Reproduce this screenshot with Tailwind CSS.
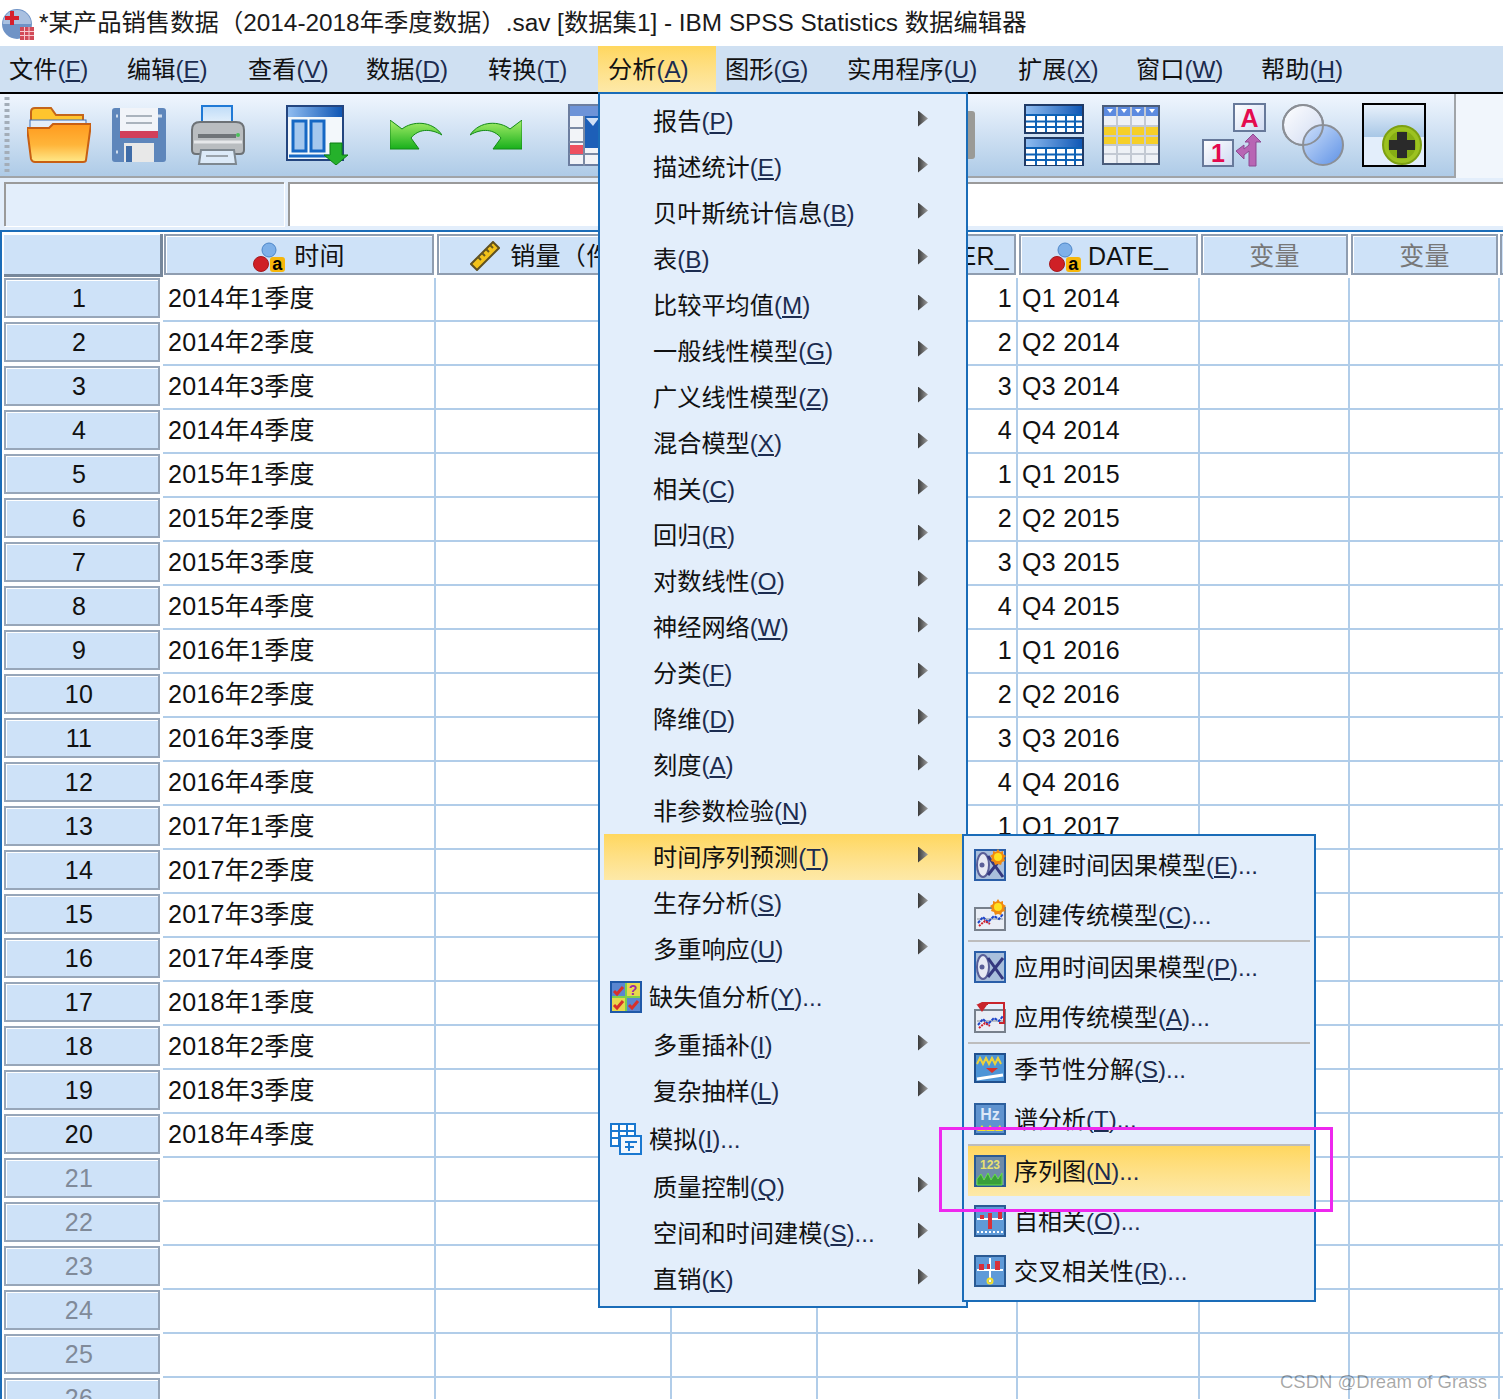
<!DOCTYPE html>
<html lang="zh"><head><meta charset="utf-8"><title>SPSS</title>
<script src="https://cdn.jsdelivr.net/npm/@tailwindcss/browser@4"></script></head>
<body class="relative w-[1503px] h-[1399px] overflow-hidden bg-white text-[#111] text-[24.2px] font-['Liberation_Sans','Noto_Sans_CJK_SC',sans-serif] [&_i]:not-italic [&_i]:text-[#1c2c50]">
<svg class="absolute w-0 h-0"><defs>
<linearGradient id="gf" x1="0" y1="0" x2="0" y2="1"><stop offset="0" stop-color="#ff9a1e"/><stop offset=".55" stop-color="#ffb53a"/><stop offset="1" stop-color="#ffe98a"/></linearGradient>
<linearGradient id="gg" x1="0" y1="0" x2="0" y2="1"><stop offset="0" stop-color="#a8ee6a"/><stop offset="1" stop-color="#18b01c"/></linearGradient>
<linearGradient id="gb" x1="0" y1="0" x2="1" y2="0"><stop offset="0" stop-color="#8fbcf0"/><stop offset="1" stop-color="#0f57b5"/></linearGradient>
<linearGradient id="gc" x1="0" y1="0" x2="1" y2="1"><stop offset="0" stop-color="#fff"/><stop offset="1" stop-color="#cfdaf2"/></linearGradient>
<linearGradient id="gd" x1="0" y1="0" x2="1" y2="1"><stop offset="0" stop-color="#cfe0fa"/><stop offset="1" stop-color="#5e92e6"/></linearGradient>
<linearGradient id="gp" x1="0" y1="0" x2="0" y2="1"><stop offset="0" stop-color="#bfdcf8"/><stop offset="1" stop-color="#eef6fd"/></linearGradient>
<symbol id="nom" viewBox="0 0 32 30"><circle cx="16" cy="8" r="7" fill="#7eb0e8" stroke="#4d86c8"/><circle cx="8" cy="22" r="7.5" fill="#cf2026" stroke="#a51a1e"/><rect x="17" y="15" width="15" height="15" rx="3" fill="#f6b60a"/><text x="24.5" y="28" text-anchor="middle" font-family="Liberation Sans" font-weight="700" font-size="18" fill="#000">a</text></symbol>
<symbol id="cau" viewBox="0 0 32 32"><rect x="1" y="1" width="30" height="30" fill="#a9bfdc" stroke="#2a5ea8" stroke-width="2"/><ellipse cx="9" cy="16" rx="6" ry="12" fill="#e6e9f4" stroke="#5a5f98" stroke-width="2"/><path d="M14 7L29 28M29 7L14 26" fill="none" stroke="#34387f" stroke-width="3"/><circle cx="8" cy="16" r="2.500" fill="#5a5f98"/></symbol>
<symbol id="star" viewBox="0 0 16 16"><path d="M8 0l2 3 3-1 0 3 3 2-2 2 1 3-3 1-1 3-3-1-3 1-1-3-3-1 1-3-2-2 3-2 0-3 3 1z" fill="#f08a10"/><circle cx="8" cy="8" r="4" fill="#ffe020"/></symbol>
<symbol id="line" viewBox="0 0 32 32"><rect x="1" y="9" width="30" height="22" fill="#e9eef6" stroke="#77808c" stroke-width="2"/><path d="M3 20h26" stroke="#8a9099"/><path d="M4 24l5-6 5 5 6-6 5 3 4-5" fill="none" stroke="#1c44c8" stroke-width="2" stroke-dasharray="3 1"/><path d="M5 27l6-5 5 3" fill="none" stroke="#d2202a" stroke-width="2" stroke-dasharray="2 1"/></symbol>
</defs></svg>

<!-- 标题栏 -->
<header class="h-[46px] flex items-center pl-[2px] pt-[1px] bg-white">
<svg class="w-[32px] h-[32px] shrink-0" viewBox="0 0 32 32"><circle cx="15" cy="16" r="15" fill="#6f93c6"/><path d="M1 16a14 14 0 0 1 28 0z" fill="#a9c0e0"/><path d="M10 3v14M3 10h14" stroke="#d61f2c" stroke-width="4"/><rect x="18" y="19" width="14" height="13" fill="#d24a58"/><path d="M18 23.5h14M18 27.5h14M22.500 19v13M27 19v13" stroke="#f6c9cf"/></svg>
<span class="ml-[5px] whitespace-nowrap text-[24.35px] text-[#1a1a1a]">*某产品销售数据（2014-2018年季度数据）.sav [数据集1] - IBM SPSS Statistics 数据编辑器</span>
</header>

<!-- 菜单栏 -->
<nav class="h-[48px] flex items-stretch bg-[#cfe0f2] border-b-2 border-black pl-[9px] whitespace-nowrap [&>div]:pt-[2px]">
<div class="w-[118px] flex items-center">文件<i>(<u>F</u>)</i></div>
<div class="w-[121px] flex items-center">编辑<i>(<u>E</u>)</i></div>
<div class="w-[118px] flex items-center">查看<i>(<u>V</u>)</i></div>
<div class="w-[122px] flex items-center">数据<i>(<u>D</u>)</i></div>
<div class="w-[110px] flex items-center">转换<i>(<u>T</u>)</i></div>
<div class="w-[118px] flex items-center pl-[10px] bg-gradient-to-b from-[#ffd75e] to-[#fde9a8]">分析<i>(<u>A</u>)</i></div>
<div class="w-[122px] flex items-center ml-[9px]">图形<i>(<u>G</u>)</i></div>
<div class="w-[171px] flex items-center">实用程序<i>(<u>U</u>)</i></div>
<div class="w-[118px] flex items-center">扩展<i>(<u>X</u>)</i></div>
<div class="w-[125px] flex items-center">窗口<i>(<u>W</u>)</i></div>
<div class="flex items-center">帮助<i>(<u>H</u>)</i></div>
</nav>

<!-- 工具栏 -->
<div class="h-[84px] bg-[#f1f6fc]">
<div class="w-[1456px] h-full flex items-center border-r-2 border-b-2 border-[#a0a4a8] bg-gradient-to-b from-[#f0f6fe] to-[#aecbe7] overflow-hidden">
<svg class="w-[6px] h-[76px] ml-[4px] shrink-0" viewBox="0 0 6 76"><path d="M3 0v76" stroke="#a3adb8" stroke-width="5" stroke-dasharray="3 3"/></svg>
<svg class="w-[64px] h-[56px] ml-[17px] shrink-0" viewBox="0 0 64 56"><path d="M4 5q0-4 4-4h16l5 7h27v16H4z" fill="#ffc52e" stroke="#c4651a" stroke-width="2"/><rect x="3" y="13" width="56" height="22" fill="#e4eef9" stroke="#3f6fb5"/><path d="M0 21h22l4-4h38l-5 36q0 2-3 2H8q-3 0-4-3z" fill="url(#gf)" stroke="#c85f12" stroke-width="2"/></svg>
<svg class="w-[54px] h-[54px] ml-[21px] shrink-0" viewBox="0 0 54 54"><path d="M0 3q0-3 3-3h48q3 0 3 3v48q0 3-3 3H3q-3 0-3-3z" fill="#5e86bb"/><rect x="8" y="0" width="38" height="30" fill="#f1f4f9"/><path d="M14 8h26M14 15h26" stroke="#aab3bd" stroke-width="2"/><rect x="8" y="23" width="38" height="7" fill="#d2405a"/><rect x="12" y="35" width="30" height="19" fill="#e8e8e8"/><rect x="14" y="38" width="6" height="16" fill="#3f6ca8"/><path d="M46 8h4M4 8h2M4 44h2" stroke="#cfdcec" stroke-width="3"/></svg>
<svg class="w-[56px] h-[62px] ml-[24px] shrink-0" viewBox="0 0 56 62"><path d="M12 2h30v22H12z" fill="url(#gp)" stroke="#1f79d6" stroke-width="2"/><path d="M2 26q0-8 8-8h36q8 0 8 8v20q0 4-4 4H6q-4 0-4-4z" fill="#b9bdc0" stroke="#6d7276" stroke-width="2"/><rect x="8" y="30" width="38" height="4" fill="#6f7478"/><path d="M4 38h48" stroke="#e6e8ea" stroke-width="3"/><circle cx="48" cy="31" r="2" fill="#4cc05a"/><path d="M11 46h33l2 14H9z" fill="#dceaf8" stroke="#7e8890" stroke-width="2"/><path d="M16 52h22" stroke="#9aa3ab" stroke-width="2"/></svg>
<svg class="w-[62px] h-[60px] ml-[40px] shrink-0" viewBox="0 0 62 60"><rect x="1" y="1" width="56" height="54" fill="#f3f8fb" stroke="#23457f" stroke-width="2"/><rect x="2" y="2" width="54" height="10" fill="url(#gb)"/><rect x="7" y="16" width="13" height="30" fill="#a5c8ee" stroke="#1668c4" stroke-width="3"/><rect x="25" y="16" width="13" height="30" fill="#a5c8ee" stroke="#1668c4" stroke-width="3"/><path d="M3 51h40" stroke="#1668c4" stroke-width="3"/><path d="M44 38h12v12h6L50 60 38 50h6z" fill="#25b12b" stroke="#0d7f15"/></svg>
<svg class="w-[52px] h-[30px] ml-[42px] shrink-0" viewBox="0 0 52 30"><path d="M0 0l12 9C22 1 42 0 52 15 40 8 28 9 21 18l8 11H0z" fill="url(#gg)" stroke="#148a18"/></svg>
<svg class="w-[52px] h-[30px] ml-[28px] shrink-0" viewBox="0 0 52 30"><path d="M52 0L40 9C30 1 10 0 0 15 12 8 24 9 31 18l-8 11h29z" fill="url(#gg)" stroke="#148a18"/></svg>
<svg class="w-[60px] h-[62px] ml-[46px] shrink-0" viewBox="0 0 60 62"><rect x="1" y="1" width="58" height="60" fill="#f2f4f8" stroke="#6c7ea0" stroke-width="2"/><rect x="2" y="2" width="56" height="10" fill="#6d93d8"/><path d="M16 12v50M1 24h15M1 38h15M1 50h58" stroke="#7b8aa4" stroke-width="2"/><rect x="17" y="12" width="15" height="32" fill="#1d5fb8"/><path d="M18 14h13l-6 8z" fill="#cfe0f6"/><rect x="2" y="41" width="13" height="9" fill="#ee5060"/></svg>
<svg class="w-[30px] h-[48px] ml-[317px] shrink-0" viewBox="0 0 30 48"><rect x="14" y="0" width="16" height="48" rx="3" fill="#9a9a96"/></svg>
<svg class="w-[60px] h-[62px] ml-[49px] shrink-0" viewBox="0 0 60 62"><rect x="1" y="1" width="58" height="28" fill="#fff" stroke="#1f3a66" stroke-width="2"/><rect x="2" y="2" width="56" height="9" fill="url(#gb)"/><path d="M2 11h56M2 17.500h56M2 23h56M12 11v17M22 11v17M32 11v17M42 11v17M51 11v17" stroke="#0e62b6" stroke-width="2"/><g transform="translate(0 33)"><rect x="1" y="1" width="58" height="28" fill="#fff" stroke="#1f3a66" stroke-width="2"/><rect x="2" y="2" width="56" height="9" fill="url(#gb)"/><path d="M2 11h56M2 17.500h56M2 23h56M12 11v17M22 11v17M32 11v17M42 11v17M51 11v17" stroke="#0e62b6" stroke-width="2"/></g></svg>
<svg class="w-[58px] h-[60px] ml-[18px] shrink-0" viewBox="0 0 58 60"><rect x="1" y="1" width="56" height="58" fill="#eef1f6" stroke="#4a5c7a" stroke-width="2"/><rect x="2" y="2" width="54" height="9" fill="#5d8be0"/><rect x="2" y="21" width="54" height="19" fill="#f6cf28"/><path d="M15 2v56M29 2v56M43 2v56M2 21h54M2 31h54M2 40h54M2 49h54" stroke="#c3c9d3" stroke-width="2"/><path d="M5 4h6l-3 4zM19 4h6l-3 4zM33 4h6l-3 4zM47 4h6l-3 4z" fill="#fff"/></svg>
<svg class="w-[64px] h-[64px] ml-[42px] shrink-0" viewBox="0 0 64 64"><rect x="32" y="1" width="31" height="27" fill="url(#gc)" stroke="#67799a" stroke-width="2"/><text x="47.500" y="24" text-anchor="middle" font-family="Liberation Sans" font-weight="700" font-size="25" fill="#e40a4e">A</text><rect x="1" y="37" width="30" height="26" fill="url(#gc)" stroke="#67799a" stroke-width="2"/><text x="16" y="59" text-anchor="middle" font-family="Liberation Sans" font-weight="700" font-size="25" fill="#e40a4e">1</text><path d="M51 31l8 8h-5v24h-7V48l-5 4v4l-8-8 8-6v4l5-4v-3h-4z" fill="#b865b4" stroke="#8d4a92"/></svg>
<svg class="w-[62px] h-[62px] ml-[16px] shrink-0" viewBox="0 0 62 62"><circle cx="21" cy="21" r="20" fill="url(#gc)" stroke="#8b8f96" stroke-width="2"/><circle cx="41" cy="41" r="20" fill="url(#gd)" stroke="#8b8f96" stroke-width="2"/><circle cx="21" cy="21" r="20" fill="none" stroke="#8b8f96" stroke-width="2"/></svg>
<div class="w-[64px] h-[64px] ml-[18px] shrink-0 border-2 border-black bg-[#e3eefb] relative">
<div class="h-[32px] bg-gradient-to-b from-[#e8f1fb] to-[#a8c7e6]"></div>
<svg class="absolute left-[18px] top-[20px] w-[40px] h-[40px]" viewBox="0 0 40 40"><circle cx="20" cy="20" r="19" fill="#9cc220" stroke="#7da012" stroke-width="2"/><circle cx="20" cy="20" r="14" fill="#86ad14"/><path d="M15 7h10v8h8v10h-8v8H15v-8H7V15h8z" fill="#2a2a2a"/></svg>
</div>
</div></div>

<!-- 编辑栏 -->
<div class="h-[52px] bg-[#e3eefb] flex pt-[4px] pl-[4px] gap-[4px]">
<div class="w-[280px] h-[44px] border-l-2 border-t-2 border-[#9a9a9a] bg-[#e3eefb] shadow-[1px_1px_0_#fff]"></div>
<div class="flex-1 h-[44px] border-l-2 border-t-2 border-[#9a9a9a] bg-white"></div>
</div>

<!-- 数据表 -->
<main class="text-[25px] tracking-[0.3px] border-l-2 border-t-2 border-[#1a6cb8] pl-[2px] grid grid-cols-[159px_273px_236px_146px_200px_182px_150px_150px_3px] grid-rows-[46px] auto-rows-[44px] [&>div]:border-r-2 [&>div]:border-b-2 [&>div]:border-[#b1cde9] [&>div]:pl-[5px] [&>div]:leading-[40px] [&>div]:whitespace-nowrap">
<span class="mt-[2px] h-[43px] bg-[#cee2f8] border-r-[3px] border-b-[3px] border-[#76879b] shadow-[inset_0_1px_0_#fff]"></span>
<span class="mt-[2px] ml-[1px] mr-[2px] h-[41px] pt-[5px] flex items-center justify-center gap-[9px] bg-[#cee2f8] border-2 border-[#8f9db0] shadow-[inset_1px_1px_0_#fff]"><svg class="w-[32px] h-[30px]"><use href="#nom"/></svg>时间</span>
<span class="mt-[2px] mr-[2px] ml-[1px] h-[41px] pt-[5px] flex items-center justify-center gap-[10px] bg-[#cee2f8] border-2 border-[#8f9db0] shadow-[inset_1px_1px_0_#fff]"><svg class="w-[30px] h-[30px] -mt-[3px]" viewBox="0 0 30 30"><path d="M1 23L23 1l6 6L7 29z" fill="#f2c21a" stroke="#5f5020" stroke-width="2"/><path d="M8 16l3 3M12 12l3 3M16 8l3 3M20 4l3 3" stroke="#6a5a20" stroke-width="2"/></svg>销量（件）</span>
<span class="mt-[2px] mr-[2px] ml-[1px] h-[41px] bg-[#cee2f8] border-2 border-[#8f9db0]"></span>
<span class="mt-[2px] mr-[2px] ml-[1px] h-[41px] pt-[5px] flex items-center justify-end gap-[8px] pr-[5px] bg-[#cee2f8] border-2 border-[#8f9db0]"><svg class="w-[32px] h-[30px]"><use href="#nom"/></svg>QUARTER_</span>
<span class="mt-[2px] mr-[2px] ml-[1px] h-[41px] pt-[5px] flex items-center justify-center gap-[7px] bg-[#cee2f8] border-2 border-[#8f9db0] shadow-[inset_1px_1px_0_#fff]"><svg class="w-[32px] h-[30px]"><use href="#nom"/></svg>DATE_</span>
<span class="mt-[2px] mr-[2px] ml-[1px] h-[41px] pt-[5px] flex items-center justify-center text-[#777] bg-[#cee2f8] border-2 border-[#8f9db0] shadow-[inset_1px_1px_0_#fff]">变量</span>
<span class="mt-[2px] mr-[2px] ml-[1px] h-[41px] pt-[5px] flex items-center justify-center text-[#777] bg-[#cee2f8] border-2 border-[#8f9db0] shadow-[inset_1px_1px_0_#fff]">变量</span>
<span class="mt-[2px] h-[41px] bg-[#cee2f8] border-l-2 border-y-2 border-[#8f9db0]"></span>

<span class="w-[156px] h-[40px] flex items-center justify-center pr-[6px] pt-[2px] bg-[#cee2f8] border-2 border-[#97a6b9] shadow-[inset_1px_1px_0_#fff]">1</span><div>2014年1季度</div><div></div><div></div><div class="text-right pr-[4px]">1</div><div class="!pl-[4px]">Q1 2014</div><div></div><div></div><div></div>
<span class="w-[156px] h-[40px] flex items-center justify-center pr-[6px] pt-[2px] bg-[#cee2f8] border-2 border-[#97a6b9] shadow-[inset_1px_1px_0_#fff]">2</span><div>2014年2季度</div><div></div><div></div><div class="text-right pr-[4px]">2</div><div class="!pl-[4px]">Q2 2014</div><div></div><div></div><div></div>
<span class="w-[156px] h-[40px] flex items-center justify-center pr-[6px] pt-[2px] bg-[#cee2f8] border-2 border-[#97a6b9] shadow-[inset_1px_1px_0_#fff]">3</span><div>2014年3季度</div><div></div><div></div><div class="text-right pr-[4px]">3</div><div class="!pl-[4px]">Q3 2014</div><div></div><div></div><div></div>
<span class="w-[156px] h-[40px] flex items-center justify-center pr-[6px] pt-[2px] bg-[#cee2f8] border-2 border-[#97a6b9] shadow-[inset_1px_1px_0_#fff]">4</span><div>2014年4季度</div><div></div><div></div><div class="text-right pr-[4px]">4</div><div class="!pl-[4px]">Q4 2014</div><div></div><div></div><div></div>
<span class="w-[156px] h-[40px] flex items-center justify-center pr-[6px] pt-[2px] bg-[#cee2f8] border-2 border-[#97a6b9] shadow-[inset_1px_1px_0_#fff]">5</span><div>2015年1季度</div><div></div><div></div><div class="text-right pr-[4px]">1</div><div class="!pl-[4px]">Q1 2015</div><div></div><div></div><div></div>
<span class="w-[156px] h-[40px] flex items-center justify-center pr-[6px] pt-[2px] bg-[#cee2f8] border-2 border-[#97a6b9] shadow-[inset_1px_1px_0_#fff]">6</span><div>2015年2季度</div><div></div><div></div><div class="text-right pr-[4px]">2</div><div class="!pl-[4px]">Q2 2015</div><div></div><div></div><div></div>
<span class="w-[156px] h-[40px] flex items-center justify-center pr-[6px] pt-[2px] bg-[#cee2f8] border-2 border-[#97a6b9] shadow-[inset_1px_1px_0_#fff]">7</span><div>2015年3季度</div><div></div><div></div><div class="text-right pr-[4px]">3</div><div class="!pl-[4px]">Q3 2015</div><div></div><div></div><div></div>
<span class="w-[156px] h-[40px] flex items-center justify-center pr-[6px] pt-[2px] bg-[#cee2f8] border-2 border-[#97a6b9] shadow-[inset_1px_1px_0_#fff]">8</span><div>2015年4季度</div><div></div><div></div><div class="text-right pr-[4px]">4</div><div class="!pl-[4px]">Q4 2015</div><div></div><div></div><div></div>
<span class="w-[156px] h-[40px] flex items-center justify-center pr-[6px] pt-[2px] bg-[#cee2f8] border-2 border-[#97a6b9] shadow-[inset_1px_1px_0_#fff]">9</span><div>2016年1季度</div><div></div><div></div><div class="text-right pr-[4px]">1</div><div class="!pl-[4px]">Q1 2016</div><div></div><div></div><div></div>
<span class="w-[156px] h-[40px] flex items-center justify-center pr-[6px] pt-[2px] bg-[#cee2f8] border-2 border-[#97a6b9] shadow-[inset_1px_1px_0_#fff]">10</span><div>2016年2季度</div><div></div><div></div><div class="text-right pr-[4px]">2</div><div class="!pl-[4px]">Q2 2016</div><div></div><div></div><div></div>
<span class="w-[156px] h-[40px] flex items-center justify-center pr-[6px] pt-[2px] bg-[#cee2f8] border-2 border-[#97a6b9] shadow-[inset_1px_1px_0_#fff]">11</span><div>2016年3季度</div><div></div><div></div><div class="text-right pr-[4px]">3</div><div class="!pl-[4px]">Q3 2016</div><div></div><div></div><div></div>
<span class="w-[156px] h-[40px] flex items-center justify-center pr-[6px] pt-[2px] bg-[#cee2f8] border-2 border-[#97a6b9] shadow-[inset_1px_1px_0_#fff]">12</span><div>2016年4季度</div><div></div><div></div><div class="text-right pr-[4px]">4</div><div class="!pl-[4px]">Q4 2016</div><div></div><div></div><div></div>
<span class="w-[156px] h-[40px] flex items-center justify-center pr-[6px] pt-[2px] bg-[#cee2f8] border-2 border-[#97a6b9] shadow-[inset_1px_1px_0_#fff]">13</span><div>2017年1季度</div><div></div><div></div><div class="text-right pr-[4px]">1</div><div class="!pl-[4px]">Q1 2017</div><div></div><div></div><div></div>
<span class="w-[156px] h-[40px] flex items-center justify-center pr-[6px] pt-[2px] bg-[#cee2f8] border-2 border-[#97a6b9] shadow-[inset_1px_1px_0_#fff]">14</span><div>2017年2季度</div><div></div><div></div><div></div><div></div><div></div><div></div><div></div>
<span class="w-[156px] h-[40px] flex items-center justify-center pr-[6px] pt-[2px] bg-[#cee2f8] border-2 border-[#97a6b9] shadow-[inset_1px_1px_0_#fff]">15</span><div>2017年3季度</div><div></div><div></div><div></div><div></div><div></div><div></div><div></div>
<span class="w-[156px] h-[40px] flex items-center justify-center pr-[6px] pt-[2px] bg-[#cee2f8] border-2 border-[#97a6b9] shadow-[inset_1px_1px_0_#fff]">16</span><div>2017年4季度</div><div></div><div></div><div></div><div></div><div></div><div></div><div></div>
<span class="w-[156px] h-[40px] flex items-center justify-center pr-[6px] pt-[2px] bg-[#cee2f8] border-2 border-[#97a6b9] shadow-[inset_1px_1px_0_#fff]">17</span><div>2018年1季度</div><div></div><div></div><div></div><div></div><div></div><div></div><div></div>
<span class="w-[156px] h-[40px] flex items-center justify-center pr-[6px] pt-[2px] bg-[#cee2f8] border-2 border-[#97a6b9] shadow-[inset_1px_1px_0_#fff]">18</span><div>2018年2季度</div><div></div><div></div><div></div><div></div><div></div><div></div><div></div>
<span class="w-[156px] h-[40px] flex items-center justify-center pr-[6px] pt-[2px] bg-[#cee2f8] border-2 border-[#97a6b9] shadow-[inset_1px_1px_0_#fff]">19</span><div>2018年3季度</div><div></div><div></div><div></div><div></div><div></div><div></div><div></div>
<span class="w-[156px] h-[40px] flex items-center justify-center pr-[6px] pt-[2px] bg-[#cee2f8] border-2 border-[#97a6b9] shadow-[inset_1px_1px_0_#fff]">20</span><div>2018年4季度</div><div></div><div></div><div></div><div></div><div></div><div></div><div></div>
<span class="w-[156px] h-[40px] flex items-center justify-center pr-[6px] pt-[2px] text-[#808a99] bg-[#cee2f8] border-2 border-[#97a6b9] shadow-[inset_1px_1px_0_#fff]">21</span><div></div><div></div><div></div><div></div><div></div><div></div><div></div><div></div>
<span class="w-[156px] h-[40px] flex items-center justify-center pr-[6px] pt-[2px] text-[#808a99] bg-[#cee2f8] border-2 border-[#97a6b9] shadow-[inset_1px_1px_0_#fff]">22</span><div></div><div></div><div></div><div></div><div></div><div></div><div></div><div></div>
<span class="w-[156px] h-[40px] flex items-center justify-center pr-[6px] pt-[2px] text-[#808a99] bg-[#cee2f8] border-2 border-[#97a6b9] shadow-[inset_1px_1px_0_#fff]">23</span><div></div><div></div><div></div><div></div><div></div><div></div><div></div><div></div>
<span class="w-[156px] h-[40px] flex items-center justify-center pr-[6px] pt-[2px] text-[#808a99] bg-[#cee2f8] border-2 border-[#97a6b9] shadow-[inset_1px_1px_0_#fff]">24</span><div></div><div></div><div></div><div></div><div></div><div></div><div></div><div></div>
<span class="w-[156px] h-[40px] flex items-center justify-center pr-[6px] pt-[2px] text-[#808a99] bg-[#cee2f8] border-2 border-[#97a6b9] shadow-[inset_1px_1px_0_#fff]">25</span><div></div><div></div><div></div><div></div><div></div><div></div><div></div><div></div>
<span class="w-[156px] h-[40px] flex items-center justify-center pr-[6px] pt-[2px] text-[#808a99] bg-[#cee2f8] border-2 border-[#97a6b9] shadow-[inset_1px_1px_0_#fff]">26</span><div></div><div></div><div></div><div></div><div></div><div></div><div></div><div></div>
</main>

<!-- 分析菜单 -->
<div class="absolute left-[598px] top-[92px] w-[370px] h-[1216px] border-2 border-[#1a6cb8] bg-[#e3eefb] pt-[4px] px-[4px] whitespace-nowrap [&>div]:h-[46px] [&>div]:flex [&>div]:items-center [&>div]:pl-[49px] [&>div]:pr-[34px] [&>div]:justify-between [&>div>span]:mt-[2px] [&_b]:w-[10px] [&_b]:h-[16px] [&_b]:bg-gradient-to-r [&_b]:from-[#3a3a3a] [&_b]:to-[#a0a0a0] [&_b]:[clip-path:polygon(0_0,100%_50%,0_100%)] [&_b]:-mt-[5px]">
<div><span>报告<i>(<u>P</u>)</i></span><b></b></div>
<div><span>描述统计<i>(<u>E</u>)</i></span><b></b></div>
<div><span>贝叶斯统计信息<i>(<u>B</u>)</i></span><b></b></div>
<div><span>表<i>(<u>B</u>)</i></span><b></b></div>
<div><span>比较平均值<i>(<u>M</u>)</i></span><b></b></div>
<div><span>一般线性模型<i>(<u>G</u>)</i></span><b></b></div>
<div><span>广义线性模型<i>(<u>Z</u>)</i></span><b></b></div>
<div><span>混合模型<i>(<u>X</u>)</i></span><b></b></div>
<div><span>相关<i>(<u>C</u>)</i></span><b></b></div>
<div><span>回归<i>(<u>R</u>)</i></span><b></b></div>
<div><span>对数线性<i>(<u>O</u>)</i></span><b></b></div>
<div><span>神经网络<i>(<u>W</u>)</i></span><b></b></div>
<div><span>分类<i>(<u>F</u>)</i></span><b></b></div>
<div><span>降维<i>(<u>D</u>)</i></span><b></b></div>
<div><span>刻度<i>(<u>A</u>)</i></span><b></b></div>
<div><span>非参数检验<i>(<u>N</u>)</i></span><b></b></div>
<div class="bg-gradient-to-b from-[#ffd75e] to-[#fde9a8]"><span>时间序列预测<i>(<u>T</u>)</i></span><b></b></div>
<div><span>生存分析<i>(<u>S</u>)</i></span><b></b></div>
<div><span>多重响应<i>(<u>U</u>)</i></span><b></b></div>
<div class="!h-[50px] !pl-[6px] !justify-start"><svg class="w-[32px] h-[32px] mr-[7px]" viewBox="0 0 32 32"><rect x="1" y="1" width="30" height="30" fill="#e8d84c" stroke="#1f58a8" stroke-width="2"/><rect x="2" y="2" width="14" height="14" fill="#5a86d0"/><rect x="16" y="16" width="14" height="14" fill="#5a86d0"/><path d="M2 16h28M16 2v28" stroke="#7ed04a" stroke-width="2"/><path d="M4 10l3 3 6-7M4 24l3 3 6-7M19 24l3 3 6-7" fill="none" stroke="#d8302a" stroke-width="3"/><text x="23" y="14" text-anchor="middle" font-family="Liberation Sans" font-weight="700" font-size="14" fill="#9a2aa8">?</text></svg><span>缺失值分析<i>(<u>Y</u>)...</i></span></div>
<div><span>多重插补<i>(<u>I</u>)</i></span><b></b></div>
<div><span>复杂抽样<i>(<u>L</u>)</i></span><b></b></div>
<div class="!h-[50px] !pl-[6px] !justify-start"><svg class="w-[32px] h-[32px] mr-[7px]" viewBox="0 0 32 32"><rect x="1" y="1" width="24" height="22" fill="#fff" stroke="#1a78d0" stroke-width="2"/><path d="M1 8h24M1 15h24M9 1v22M17 1v22" stroke="#1a78d0" stroke-width="2"/><rect x="10" y="13" width="21" height="18" fill="#f2f7fd" stroke="#1a78d0" stroke-width="2"/><path d="M15 19h12M15 24h9M19 19v9" stroke="#1a78d0" stroke-width="2"/></svg><span>模拟<i>(<u>I</u>)...</i></span></div>
<div><span>质量控制<i>(<u>Q</u>)</i></span><b></b></div>
<div><span>空间和时间建模<i>(<u>S</u>)...</i></span><b></b></div>
<div><span>直销<i>(<u>K</u>)</i></span><b></b></div>
</div>

<!-- 时间序列预测子菜单 -->
<div class="absolute left-[962px] top-[834px] w-[354px] h-[468px] border-2 border-[#1a6cb8] bg-[#e3eefb] pt-[4px] px-[4px] text-[24px] whitespace-nowrap [&>div]:h-[50px] [&>div]:flex [&>div]:items-center [&>div]:pl-[6px] [&>div>span]:mt-[2px] [&_svg]:shrink-0 [&>div>svg]:mr-[8px] [&>div>svg]:w-[32px] [&>div>svg]:h-[32px] [&>hr]:h-[2px] [&>hr]:border-0 [&>hr]:bg-[#bdbdbd]">
<div><svg viewBox="0 0 32 32"><use href="#cau" width="32" height="32"/><use href="#star" x="16" y="0" width="16" height="16"/></svg><span>创建时间因果模型<i>(<u>E</u>)...</i></span></div>
<div><svg viewBox="0 0 32 32"><use href="#line" width="32" height="32"/><use href="#star" x="16" y="0" width="16" height="16"/></svg><span>创建传统模型<i>(<u>C</u>)...</i></span></div>
<hr>
<div><svg viewBox="0 0 32 32"><use href="#cau" width="32" height="32"/></svg><span>应用时间因果模型<i>(<u>P</u>)...</i></span></div>
<div><svg viewBox="0 0 32 32"><use href="#line" width="32" height="32"/><path d="M12 2h18v20h-5" fill="none" stroke="#c8242c" stroke-width="2"/><path d="M2 4h12v-3l-6 0v0M3 4l5 7 5-7z" fill="#c8242c"/></svg><span>应用传统模型<i>(<u>A</u>)...</i></span></div>
<hr>
<div><svg viewBox="0 0 32 32"><rect x="1" y="1" width="30" height="28" fill="#4d94d6" stroke="#20508e" stroke-width="2"/><path d="M3 11l3-6 3 6 3-6 3 6 3-6 3 6 3-6 3 6" fill="none" stroke="#ecd23c" stroke-width="2"/><path d="M12 15h12l-6 5z" fill="#d8302a"/><path d="M3 26l26-4" stroke="#fff" stroke-width="3"/></svg><span>季节性分解<i>(<u>S</u>)...</i></span></div>
<div><svg viewBox="0 0 32 32"><rect x="1" y="1" width="30" height="30" fill="#5f93cf" stroke="#2c5f9e" stroke-width="2"/><text x="16" y="17" text-anchor="middle" font-family="Liberation Sans" font-weight="700" font-size="16" fill="#dbe8f8">Hz</text><path d="M3 28l5-6 4 6 4-6 5 6 5-6 3 6z" fill="#f6e02a"/></svg><span>谱分析<i>(<u>T</u>)...</i></span></div>
<hr>
<div class="bg-gradient-to-b from-[#ffd75e] to-[#fde9a8]"><svg viewBox="0 0 32 32"><rect x="1" y="1" width="30" height="30" fill="#6d8ba8" stroke="#2a5a94" stroke-width="2"/><text x="16" y="14" text-anchor="middle" font-family="Liberation Sans" font-weight="700" font-size="12" fill="#e8e070">123</text><path d="M3 24l4-5 3 6 4-7 3 7 4-6 3 5 4-6v12H3z" fill="#3a9e3a" stroke="#66e04a"/></svg><span>序列图<i>(<u>N</u>)...</i></span></div>
<div><svg viewBox="0 0 32 32"><rect x="1" y="1" width="30" height="30" fill="#5f9ad8" stroke="#2a5a94" stroke-width="2"/><path d="M3 14h26" stroke="#fff" stroke-width="2"/><path d="M6 14v-4h4v4zM14 14v-6h4v6zM24 14V4h4v10zM14 14v10h4V14z" fill="#d8303a"/><path d="M3 27h26" stroke="#fff" stroke-width="2" stroke-dasharray="2 2"/></svg><span>自相关<i>(<u>O</u>)...</i></span></div>
<div><svg viewBox="0 0 32 32"><rect x="1" y="1" width="30" height="30" fill="#5f9ad8" stroke="#2a5a94" stroke-width="2"/><path d="M3 15h26M16 3v24" stroke="#fff" stroke-width="2"/><path d="M5 15v-6h5v6zM21 15V6h5v9zM13 9h3v5h-3z" fill="#d8303a"/><circle cx="16" cy="26" r="2.500" fill="none" stroke="#f6e02a" stroke-width="2"/></svg><span>交叉相关性<i>(<u>R</u>)...</i></span></div>
</div>

<!-- 高亮框 -->
<div class="absolute left-[939px] top-[1127px] w-[394px] h-[85px] border-[3px] border-[#ee28ee]"></div>
<div class="absolute left-[1280px] top-[1368px] text-[18.5px] text-black/35 whitespace-nowrap">CSDN @Dream of Grass</div>
</body></html>
